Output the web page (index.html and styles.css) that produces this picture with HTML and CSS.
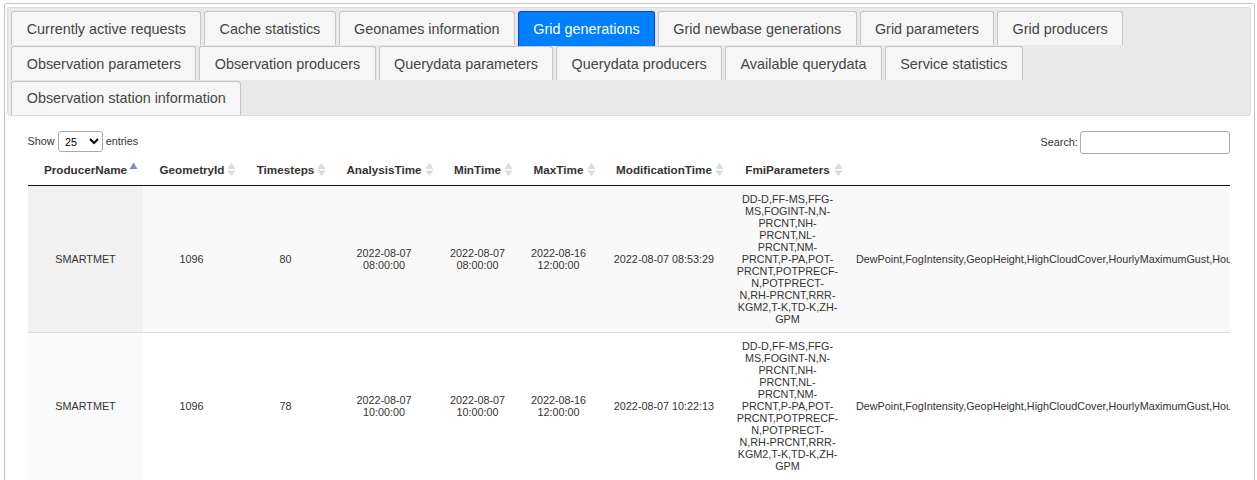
FILE: index.html
```
<!DOCTYPE html>
<html lang="en">
<head>
<meta charset="utf-8">
<title>Grid generations</title>
<link rel="stylesheet" href="styles.css">
</head>
<body>
<div class="tabs">
  <ul class="nav">
    <li>Currently active requests</li>
    <li>Cache statistics</li>
    <li>Geonames information</li>
    <li class="active">Grid generations</li>
    <li>Grid newbase generations</li>
    <li>Grid parameters</li>
    <li>Grid producers</li>
    <li>Observation parameters</li>
    <li>Observation producers</li>
    <li>Querydata parameters</li>
    <li>Querydata producers</li>
    <li>Available querydata</li>
    <li>Service statistics</li>
    <li class="last">Observation station information</li>
  </ul>
  <div class="panel">
    <div class="controls">
      <label class="length"><span>Show</span> <select><option>10</option><option selected>25</option><option>50</option></select> <span>entries</span></label>
      <label class="search"><span>Search:</span><input type="search"></label>
    </div>
    <div class="scroll">
      <table>
        <colgroup><col class="c1"><col class="c2"><col class="c3"><col class="c4"><col class="c5"><col class="c6"><col class="c7"><col class="c8"><col></colgroup>
        <thead>
          <tr>
            <th>ProducerName<svg class="sort asc" viewBox="0 0 19 19"><path d="M9.5 2.5 13.5 9h-8z"/></svg></th>
            <th>GeometryId<svg class="sort" viewBox="0 0 19 19"><path d="M9.5 2.5 13.5 9h-8zM5.5 10.5h8L9.5 16z"/></svg></th>
            <th class="tight">Timesteps<svg class="sort" viewBox="0 0 19 19"><path d="M9.5 2.5 13.5 9h-8zM5.5 10.5h8L9.5 16z"/></svg></th>
            <th class="tight">AnalysisTime<svg class="sort wide" viewBox="0 0 19 19"><path d="M9.5 2.5 13.5 9h-8zM5.5 10.5h8L9.5 16z"/></svg></th>
            <th class="tight">MinTime<svg class="sort" viewBox="0 0 19 19"><path d="M9.5 2.5 13.5 9h-8zM5.5 10.5h8L9.5 16z"/></svg></th>
            <th class="tight">MaxTime<svg class="sort wide" viewBox="0 0 19 19"><path d="M9.5 2.5 13.5 9h-8zM5.5 10.5h8L9.5 16z"/></svg></th>
            <th>ModificationTime<svg class="sort wide" viewBox="0 0 19 19"><path d="M9.5 2.5 13.5 9h-8zM5.5 10.5h8L9.5 16z"/></svg></th>
            <th>FmiParameters<svg class="sort wide" viewBox="0 0 19 19"><path d="M9.5 2.5 13.5 9h-8zM5.5 10.5h8L9.5 16z"/></svg></th>
            <th></th>
          </tr>
        </thead>
        <tbody>
          <tr class="odd">
            <td>SMARTMET</td><td class="tight">1096</td><td class="tight">80</td>
            <td class="tight">2022-08-07<br>08:00:00</td><td class="tight">2022-08-07<br>08:00:00</td><td class="tight">2022-08-16<br>12:00:00</td>
            <td>2022-08-07 08:53:29</td>
            <td class="fmi">DD-D,FF-MS,FFG-<br>MS,FOGINT-N,N-<br>PRCNT,NH-<br>PRCNT,NL-<br>PRCNT,NM-<br>PRCNT,P-PA,POT-<br>PRCNT,POTPRECF-<br>N,POTPRECT-<br>N,RH-PRCNT,RRR-<br>KGM2,T-K,TD-K,ZH-<br>GPM</td>
            <td class="names">DewPoint,FogIntensity,GeopHeight,HighCloudCover,HourlyMaximumGust,Hourly</td>
          </tr>
          <tr class="even">
            <td>SMARTMET</td><td class="tight">1096</td><td class="tight">78</td>
            <td class="tight">2022-08-07<br>10:00:00</td><td class="tight">2022-08-07<br>10:00:00</td><td class="tight">2022-08-16<br>12:00:00</td>
            <td>2022-08-07 10:22:13</td>
            <td class="fmi">DD-D,FF-MS,FFG-<br>MS,FOGINT-N,N-<br>PRCNT,NH-<br>PRCNT,NL-<br>PRCNT,NM-<br>PRCNT,P-PA,POT-<br>PRCNT,POTPRECF-<br>N,POTPRECT-<br>N,RH-PRCNT,RRR-<br>KGM2,T-K,TD-K,ZH-<br>GPM</td>
            <td class="names">DewPoint,FogIntensity,GeopHeight,HighCloudCover,HourlyMaximumGust,Hourly</td>
          </tr>
        </tbody>
      </table>
    </div>
  </div>
</div>
</body>
</html>
```
FILE: styles.css
```
* { box-sizing: border-box; }
html { height: 100%; overflow: hidden; }
body {
  margin: 0;
  height: 100%;
  overflow: hidden;
  padding: 3px 2px 0 4px;
  font-family: "Liberation Sans", Arial, sans-serif;
  color: #333;
  background: #fff;
}
.tabs {
  height: 500px;
  padding: 3px;
  padding-left: 2px;
  border: 1px solid #c5c5c5;
  border-radius: 3px;
}
.nav {
  display: flex;
  flex-wrap: wrap;
  align-content: flex-start;
  column-gap: 2.88px;
  height: 109px;
  margin: 0;
  padding: 3px 120px 0 3.3px;
  list-style: none;
  font-size: 14.4px;
  line-height: 18px;
  background: #e9e9e9;
  border: 1px solid #ddd;
  border-radius: 3px;
}
.nav li {
  height: 34px;
  margin-bottom: 1px;
  padding: 8px 14.4px 0;
  color: #454545;
  white-space: nowrap;
  background: #f6f6f6;
  border: 1px solid #c5c5c5;
  border-bottom: 0;
  border-radius: 3px 3px 0 0;
}
.nav .last { padding-top: 7px; }
.nav .active {
  height: 35px;
  margin-bottom: 0;
  color: #fff;
  background: #007fff;
  border-color: #003eff;
}
.panel { padding: 15px 21px 0; font-size: 10.8px; }
.controls { display: flex; justify-content: space-between; align-items: flex-start; height: 24px; }
.controls span { padding-bottom: 2px; }
.length { display: flex; align-items: center; gap: 3px; height: 21px; line-height: 12px; }
.length span:first-child { margin-left: -0.4px; margin-right: 0.4px; }
.length span:last-child { margin-left: -0.4px; }
.length select {
  width: 45px;
  height: 21px;
  padding: 0 2px;
  font: 10.8px "Liberation Sans", Arial, sans-serif;
  color: #000;
  background: transparent;
  border: 1px solid #aaa;
  border-radius: 3px;
}
.search { display: flex; align-items: center; gap: 2.2px; line-height: 12px; }
.search input { width: 150px; height: 23px; border: 1px solid #aaa; border-radius: 3px; background: transparent; }
.scroll { overflow: hidden; }
table { width: 1400px; table-layout: fixed; border-collapse: separate; border-spacing: 0; }
.c1 { width: 115px; }
.c2 { width: 98px; }
.c3 { width: 90px; }
.c4 { width: 107px; }
.c5 { width: 80px; }
.c6 { width: 82px; }
.c7 { width: 128px; }
.c8 { width: 119px; }
th {
  position: relative;
  height: 31px;
  padding: 0 0 2px;
  font-size: 11.7px;
  line-height: 13px;
  text-align: center;
  white-space: nowrap;
  border-bottom: 1px solid #111;
}
td {
  height: 147px;
  padding: 7px 0;
  line-height: 12px;
  text-align: center;
  vertical-align: middle;
  white-space: nowrap;
  border-bottom: 1px solid #ddd;
}
.tight { padding-right: 1px; }
.sort { position: absolute; top: 5px; right: 0; width: 19px; height: 19px; fill: #dcdcdc; }
.wide { right: -1px; }
.asc { fill: #7f86e0; }
.odd td { background: #f9f9f9; }
.odd td:first-child { background: #f1f1f1; }
.even td { border-bottom-color: transparent; }
.even td:first-child { background: #fafafa; }
td.names { padding-left: 9px; text-align: left; }
```
